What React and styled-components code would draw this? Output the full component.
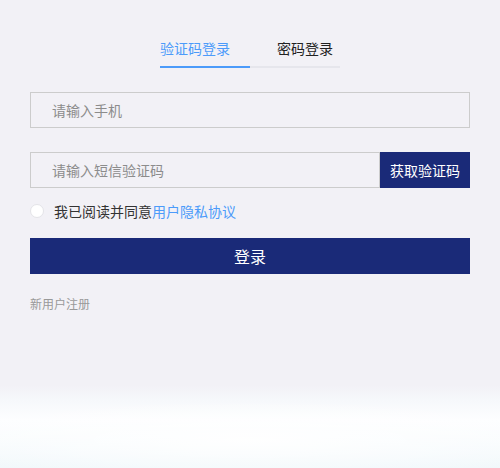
import React, { useState } from 'react';
import styled, { createGlobalStyle } from 'styled-components';

const GlobalStyle = createGlobalStyle`
  html, body {
    margin: 0;
    padding: 0;
    height: 100%;
  }
  body {
    font-family: "Noto Sans CJK SC", "Liberation Sans", sans-serif;
    background: #f2f1f6;
  }
  #root {
    height: 100%;
  }
`;

/* 전체 화면: 아래쪽에 구름 느낌의 흰 그라데이션 */
const Page = styled.div`
  height: 468px;
  box-sizing: border-box;
  padding: 30px 30px 0;
  background:
    radial-gradient(ellipse 70% 40px at 50% 440px, rgba(255,255,255,0.9), rgba(255,255,255,0) 100%),
    linear-gradient(to bottom, #f2f1f6 0px, #f2f1f6 385px, #f6f8fb 400px, #fdfeff 420px, #f7fbfd 445px, #f1f8fb 468px);
`;

const Tabs = styled.div`
  display: flex;
  justify-content: center;
`;

const Tab = styled.div`
  width: 90px;
  height: 38px;
  box-sizing: border-box;
  font-size: 14px;
  line-height: 36px;
  color: ${p => (p.active ? '#4c9bfa' : '#222')};
  text-align: ${p => (p.active ? 'left' : 'right')};
  padding-right: ${p => (p.active ? 0 : '7px')};
  border-bottom: ${p => (p.active ? '2px solid #4c9bfa' : '2px solid #e6e6ec')};
  cursor: pointer;
`;

const Form = styled.div`
  margin-top: 24px;
`;

const Row = styled.div`
  display: flex;
  height: 36px;
  margin-bottom: ${p => p.mb || 0}px;
`;

const Input = styled.input`
  flex: 1;
  min-width: 0;
  height: 36px;
  box-sizing: border-box;
  border: 1px solid #cccccc;
  background: transparent;
  padding: 0 21px;
  font-size: 14px;
  font-family: inherit;
  color: #333;
  outline: none;
  &::placeholder {
    color: #8c8c8c;
  }
`;

const CodeButton = styled.button`
  width: 90px;
  height: 36px;
  border: none;
  background: #1a2a78;
  color: #fff;
  font-size: 14px;
  font-family: inherit;
  padding: 0;
  cursor: pointer;
`;

const Agree = styled.label`
  display: flex;
  align-items: center;
  height: 20px;
  margin-top: 13px;
  font-size: 14px;
  color: #333;
  cursor: pointer;
`;

const Circle = styled.span`
  width: 12px;
  height: 12px;
  border-radius: 50%;
  border: 1px solid #e4e4e8;
  background: #fff;
  margin-right: 10px;
`;

const Link = styled.a`
  color: #4c9bfa;
  text-decoration: none;
`;

const Submit = styled.button`
  display: block;
  width: 100%;
  height: 36px;
  margin-top: 17px;
  border: none;
  background: #1a2a78;
  color: #fff;
  font-size: 16px;
  font-family: inherit;
  cursor: pointer;
`;

const Register = styled.div`
  margin-top: 21px;
  font-size: 12px;
  color: #999;
`;

export default function App() {
  const [tab, setTab] = useState(0);

  return (
    <>
      <GlobalStyle />
      <Page>
        <Tabs>
          <Tab active={tab === 0} onClick={() => setTab(0)}>验证码登录</Tab>
          <Tab active={tab === 1} onClick={() => setTab(1)}>密码登录</Tab>
        </Tabs>
        <Form>
          <Row mb={24}>
            <Input placeholder="请输入手机" />
          </Row>
          <Row>
            <Input placeholder="请输入短信验证码" />
            <CodeButton>获取验证码</CodeButton>
          </Row>
          <Agree>
            <Circle />
            我已阅读并同意<Link href="#">用户隐私协议</Link>
          </Agree>
          <Submit>登录</Submit>
          <Register>新用户注册</Register>
        </Form>
      </Page>
    </>
  );
}
